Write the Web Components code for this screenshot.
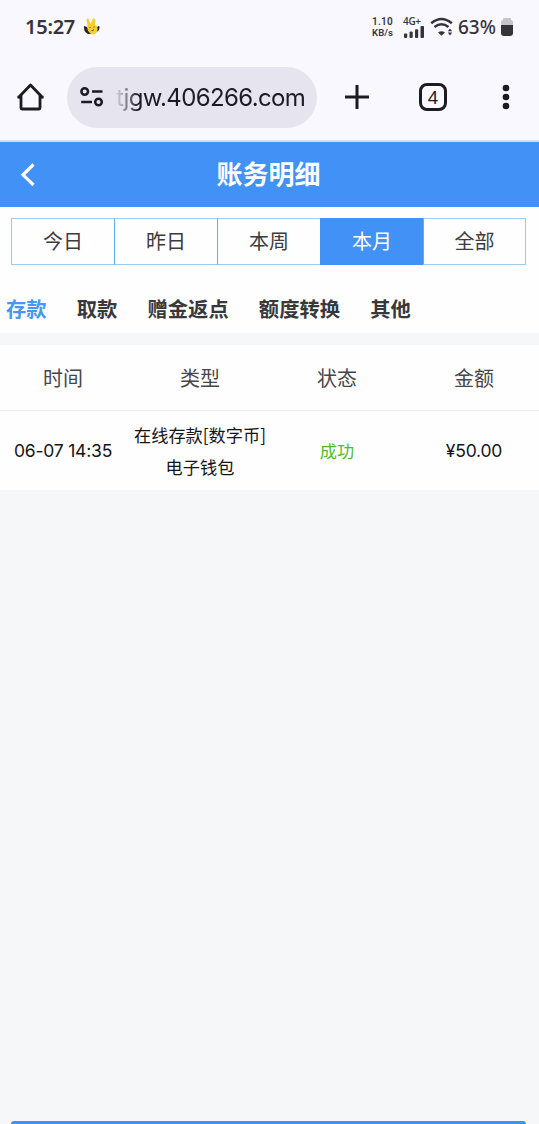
<!DOCTYPE html>
<html lang="zh-CN">
<head>
<meta charset="utf-8">
<title>账务明细</title>
<style>
html,body{margin:0;padding:0}
body{background:#f6f7f9;font-family:"Noto Sans","Noto Sans CJK SC",sans-serif;height:1124px;overflow:hidden}
</style>
</head>
<body>
<account-page></account-page>
<script>
function define(name, html){
  const t=document.createElement('template');
  t.innerHTML=html;
  customElements.define(name,class extends HTMLElement{
    constructor(){super();this.attachShadow({mode:'open'}).appendChild(t.content.cloneNode(true));}
  });
}

define('status-bar',`<style>
:host{display:flex;height:54px;box-sizing:border-box;padding:0 26px 0 25px;align-items:center;background:#f9f8fe;color:#35343b;font-family:"Noto Sans",sans-serif}
svg{display:block;flex:none}
.time{font:600 20px/24px "Noto Sans",sans-serif;width:51px;letter-spacing:-.25px;white-space:nowrap}
.bee{margin-left:7px}
.rate{margin-left:auto;width:23px;font:600 10px/11px Roboto,sans-serif;white-space:nowrap;display:flex;flex-direction:column;align-items:center;position:relative;left:-1px}
.rate div{height:11px;line-height:11px;letter-spacing:.3px}
.rate div:last-child{font-size:9.5px;letter-spacing:.1px}
.net{margin-left:8px;width:22px}
.net div{font:600 10px/9px "Open Sans",sans-serif;letter-spacing:-.3px;white-space:nowrap}
.wifi{margin-left:5px}
.pct{font:500 19px/24px "Noto Sans",sans-serif;margin-left:5px;width:39px;letter-spacing:0;white-space:nowrap}
.bat{margin-left:4px}
</style>
<span class="time">15:27</span>
<svg class="bee" width="18" height="20" viewBox="0 0 18 20"><path d="M1 9Q0 14 5 17L9 17 4 10zM13 11Q17 7 16.500 11T12 15z" fill="#29242c"/><path d="M3.500 3Q4 .5 6 2.500L7.500 7 9.500 2.500Q11 0 12.500 3L12 8Q15 9 14.500 13 13 19 8 17 3 13 4.500 8z" fill="#f4d02c"/><path d="M7 10v1M11 9.500v1M8.500 13.500q1.500.5 2.500-1" stroke="#75401c" fill="none"/></svg>
<div class="rate"><div>1.10</div><div>KB/s</div></div>
<div class="net"><div>4G+</div><svg width="22" height="12" viewBox="0 0 22 13" preserveAspectRatio="none" fill="#35343b"><rect x="1" y="8" width="3.2" height="5" rx="1"/><rect x="6.5" y="6" width="3.2" height="7" rx="1"/><rect x="12" y="3.5" width="3.2" height="9.5" rx="1"/><rect x="17.5" y="0" width="3.5" height="13" rx="1"/></svg></div>
<svg class="wifi" width="23" height="20" viewBox="0 0 23 20" fill="none" stroke="#35343b" stroke-width="2.5"><path d="M1.2 6.2Q11.5-2.2 21.8 6.2M4.5 10Q11.5 4.5 18.5 10"/><path d="M8 15.400q3.500-2.400 7 0L11.500 18.700zM17.800 14.200l2.200-2.800 2.200 2.800zM17.800 15.600h4.400L20 18.600z" fill="#35343b" stroke="none"/></svg>
<span class="pct">63%</span>
<svg class="bat" width="12" height="20" viewBox="0 0 12 20"><path d="M2 3V2Q2 1 3 1h6q1 0 1 1v1q2 0 2 2v3H0V5q0-2 2-2" fill="#c5c4ca"/><path d="M0 8h12v8q0 3-3 3H3q-3 0-3-3z" fill="#35343b"/></svg>`);

define('browser-bar',`<style>
:host{display:flex;height:88px;box-sizing:border-box;padding-left:16px;align-items:center;background:#f9f8fe;border-bottom:2px solid #d5dcea;color:#1d1b22}
svg{display:block;flex:none;fill:none;stroke:#1d1b22}
.url{display:flex;flex:none;align-items:center;width:250px;height:61px;border-radius:31px;background:#e6e5ef;margin-left:22px;box-sizing:border-box;padding-left:13px}
.addr{margin-left:12px;width:190px;font:400 24px/32px Inter,sans-serif;letter-spacing:-.62px;white-space:nowrap;display:block;padding-top:2px}
.addr span{background:linear-gradient(90deg,#1d1b2210,#1d1b2290 12px,#1d1b22 22px);-webkit-background-clip:text;background-clip:text;color:transparent}
.plus{margin-left:27px}.tabs{flex:none;margin-left:49px;width:28px;height:28px;border:3px solid #1d1b22;border-radius:8px;box-sizing:border-box;font:400 18px/23px "Noto Sans",sans-serif;text-align:center}
.more{margin-left:55px}
</style>
<svg width="29" height="29" viewBox="0 0 29 29" stroke-width="2.8" stroke-linejoin="round"><path d="M2 15L14.5 2 27 15M5 12.500V24.500Q5 26 6.500 26H22.500Q24 26 24 24.500V12.500M1.500 14.200H5M24 14.200h3.500"/></svg>
<div class="url"><svg width="24" height="20" viewBox="0 0 24 20" stroke-width="2.5"><circle cx="4.700" cy="4.500" r="3.300"/><path d="M12 4.500h10.500M1.200 15H12"/><circle cx="18.500" cy="15" r="3.300"/></svg>
<div class="addr"><span>tjgw.406266.com</span></div></div>
<svg class="plus" width="26" height="26" viewBox="0 0 26 26" stroke-width="3"><path d="M1 13h24M13 1v24"/></svg>
<div class="tabs">4</div>
<svg class="more" width="8" height="26" viewBox="0 0 8 26" style="fill:#1d1b22;stroke:none"><circle cx="4" cy="4" r="3.300"/><circle cx="4" cy="13" r="3.300"/><circle cx="4" cy="22" r="3.300"/></svg>`);

define('title-bar',`<style>
:host{display:grid;grid-template-columns:48px 1fr 50px;height:65px;align-items:center;background:#4191f6;color:#fff}
h1{margin:0;text-align:center;font:700 26px/36px "Noto Sans CJK SC",sans-serif;padding-bottom:4px}
svg{display:block;margin-left:20px}
</style>
<svg width="16" height="24" viewBox="0 0 16 24" fill="none" stroke="#fff" stroke-width="3.2"><path d="M13.500 1.500L3 11.800 13.500 22"/></svg><h1><slot></slot></h1>`);

define('period-item',`<style>
:host{display:block;box-sizing:border-box;height:47px;border:1px solid #9dcbe9;border-right-width:0;border-left:1.500px solid #5eaee8;text-align:center;color:#3c3c3f;font:400 20px/43px "Noto Sans CJK SC",sans-serif}
:host(:first-child){border-left-color:#9dcbe9}
:host(:last-child){border-right-width:1px}
:host([active]){background:#4191f6;color:#fff;border-color:#4191f6}
</style><slot></slot>`);

define('period-tabs',`<style>
:host{display:grid;grid-template-columns:repeat(5,1fr);padding:11px 13px 0 11px;background:#fefefe}
</style><slot></slot>`);

define('kind-tab',`<style>
:host{display:block;color:#38383b;font:700 20.300px/30px "Noto Sans CJK SC",sans-serif;white-space:nowrap}
:host([active]){color:#4598f2}
</style><slot></slot>`);

define('kind-tabs',`<style>
:host{display:flex;gap:30.200px;padding:28px 6px 0;height:68px;box-sizing:border-box;background:#fefefe}
</style><slot></slot>`);

define('record-row',`<style>
:host{display:grid;grid-template-columns:repeat(4,137px);margin:0 -5.500px;height:79px;align-items:center;text-align:center;color:#151517;font:400 17.200px/32px "Noto Sans CJK SC",sans-serif}
:host([head]){height:65px;color:#46464a;font-size:20px;border-bottom:1px solid #ebedf0}
</style><slot></slot>`);

define('record-cell',`<style>
:host{display:block;white-space:nowrap}
:host([ok]){color:#4fbd22}
:host([num]){font:400 17.500px/32px Inter,sans-serif;letter-spacing:-.2px}
</style><slot></slot>`);

define('record-table',`<style>
:host{display:block;background:#fefefe;margin-top:12px;overflow:hidden}
</style><slot></slot>`);

define('account-page',`<style>
:host{display:flex;flex-direction:column;width:539px;height:1124px;background:#f6f7f9;overflow:hidden}
.bottom{margin:auto 13px 0 11px;height:3px;background:#4191f6;border-radius:3px 3px 0 0;flex:none}
</style>
<status-bar></status-bar>
<browser-bar></browser-bar>
<title-bar>账务明细</title-bar>
<period-tabs><period-item>今日</period-item><period-item>昨日</period-item><period-item>本周</period-item><period-item active>本月</period-item><period-item>全部</period-item></period-tabs>
<kind-tabs><kind-tab active>存款</kind-tab><kind-tab>取款</kind-tab><kind-tab>赠金返点</kind-tab><kind-tab>额度转换</kind-tab><kind-tab>其他</kind-tab></kind-tabs>
<record-table>
<record-row head><record-cell>时间</record-cell><record-cell>类型</record-cell><record-cell>状态</record-cell><record-cell>金额</record-cell></record-row>
<record-row><record-cell num>06-07 14:35</record-cell><record-cell>在线存款[数字币]<br>电子钱包</record-cell><record-cell ok>成功</record-cell><record-cell num>¥50.00</record-cell></record-row>
</record-table>
<div class="bottom"></div>`);
</script>
</body>
</html>
